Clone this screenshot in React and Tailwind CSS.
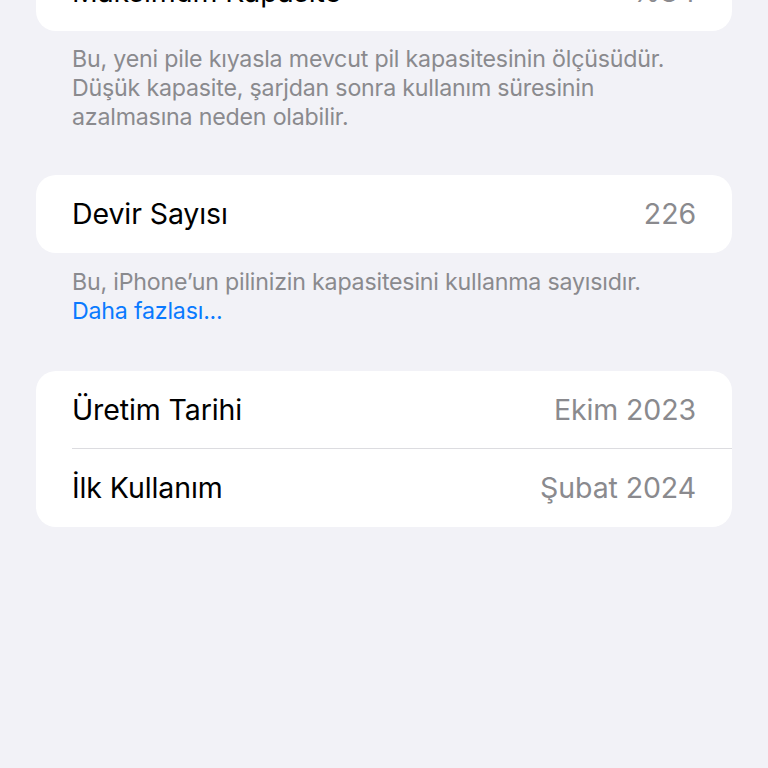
import React from 'react';

const Row = ({ label, value, divider }) => (
  <div className="relative flex h-[78px] items-center justify-between pl-9 pr-9">
    <span className="text-[28.5px] tracking-[-0.1px] text-black">{label}</span>
    <span className="text-[28.5px] tracking-[-0.1px] text-[#8a8a8e]">{value}</span>
    {divider && <div className="absolute bottom-0 left-9 right-0 h-px bg-[#dcdce0]" />}
  </div>
);

const Card = ({ children, className = '' }) => (
  <div className={`mx-9 overflow-hidden rounded-[20px] bg-white ${className}`}>{children}</div>
);

const Footer = ({ children }) => (
  <div className="px-[72px] text-[23.2px] leading-[29px] tracking-[-0.2px] text-[#8a8a8e]">{children}</div>
);

export default function App() {
  return (
    <div className="min-h-[768px] w-[768px] overflow-hidden bg-[#f2f2f7] font-['Inter','Noto_Sans',sans-serif]">
      <Card className="-mt-[47px]">
        <Row label="Maksimum Kapasite" value="%84" />
      </Card>
      <div className="mt-[14px]">
        <Footer>
          Bu, yeni pile kıyasla mevcut pil kapasitesinin ölçüsüdür.
          <br />
          Düşük kapasite, şarjdan sonra kullanım süresinin
          <br />
          azalmasına neden olabilir.
        </Footer>
      </div>
      <Card className="mt-[43px]">
        <Row label="Devir Sayısı" value="226" />
      </Card>
      <div className="mt-[15px]">
        <Footer>
          Bu, iPhone’un pilinizin kapasitesini kullanma sayısıdır.
          <br />
          <span className="text-[#0a7aff]">Daha fazlası...</span>
        </Footer>
      </div>
      <Card className="mt-[45px]">
        <Row label="Üretim Tarihi" value="Ekim 2023" divider />
        <Row label="İlk Kullanım" value="Şubat 2024" />
      </Card>
    </div>
  );
}
